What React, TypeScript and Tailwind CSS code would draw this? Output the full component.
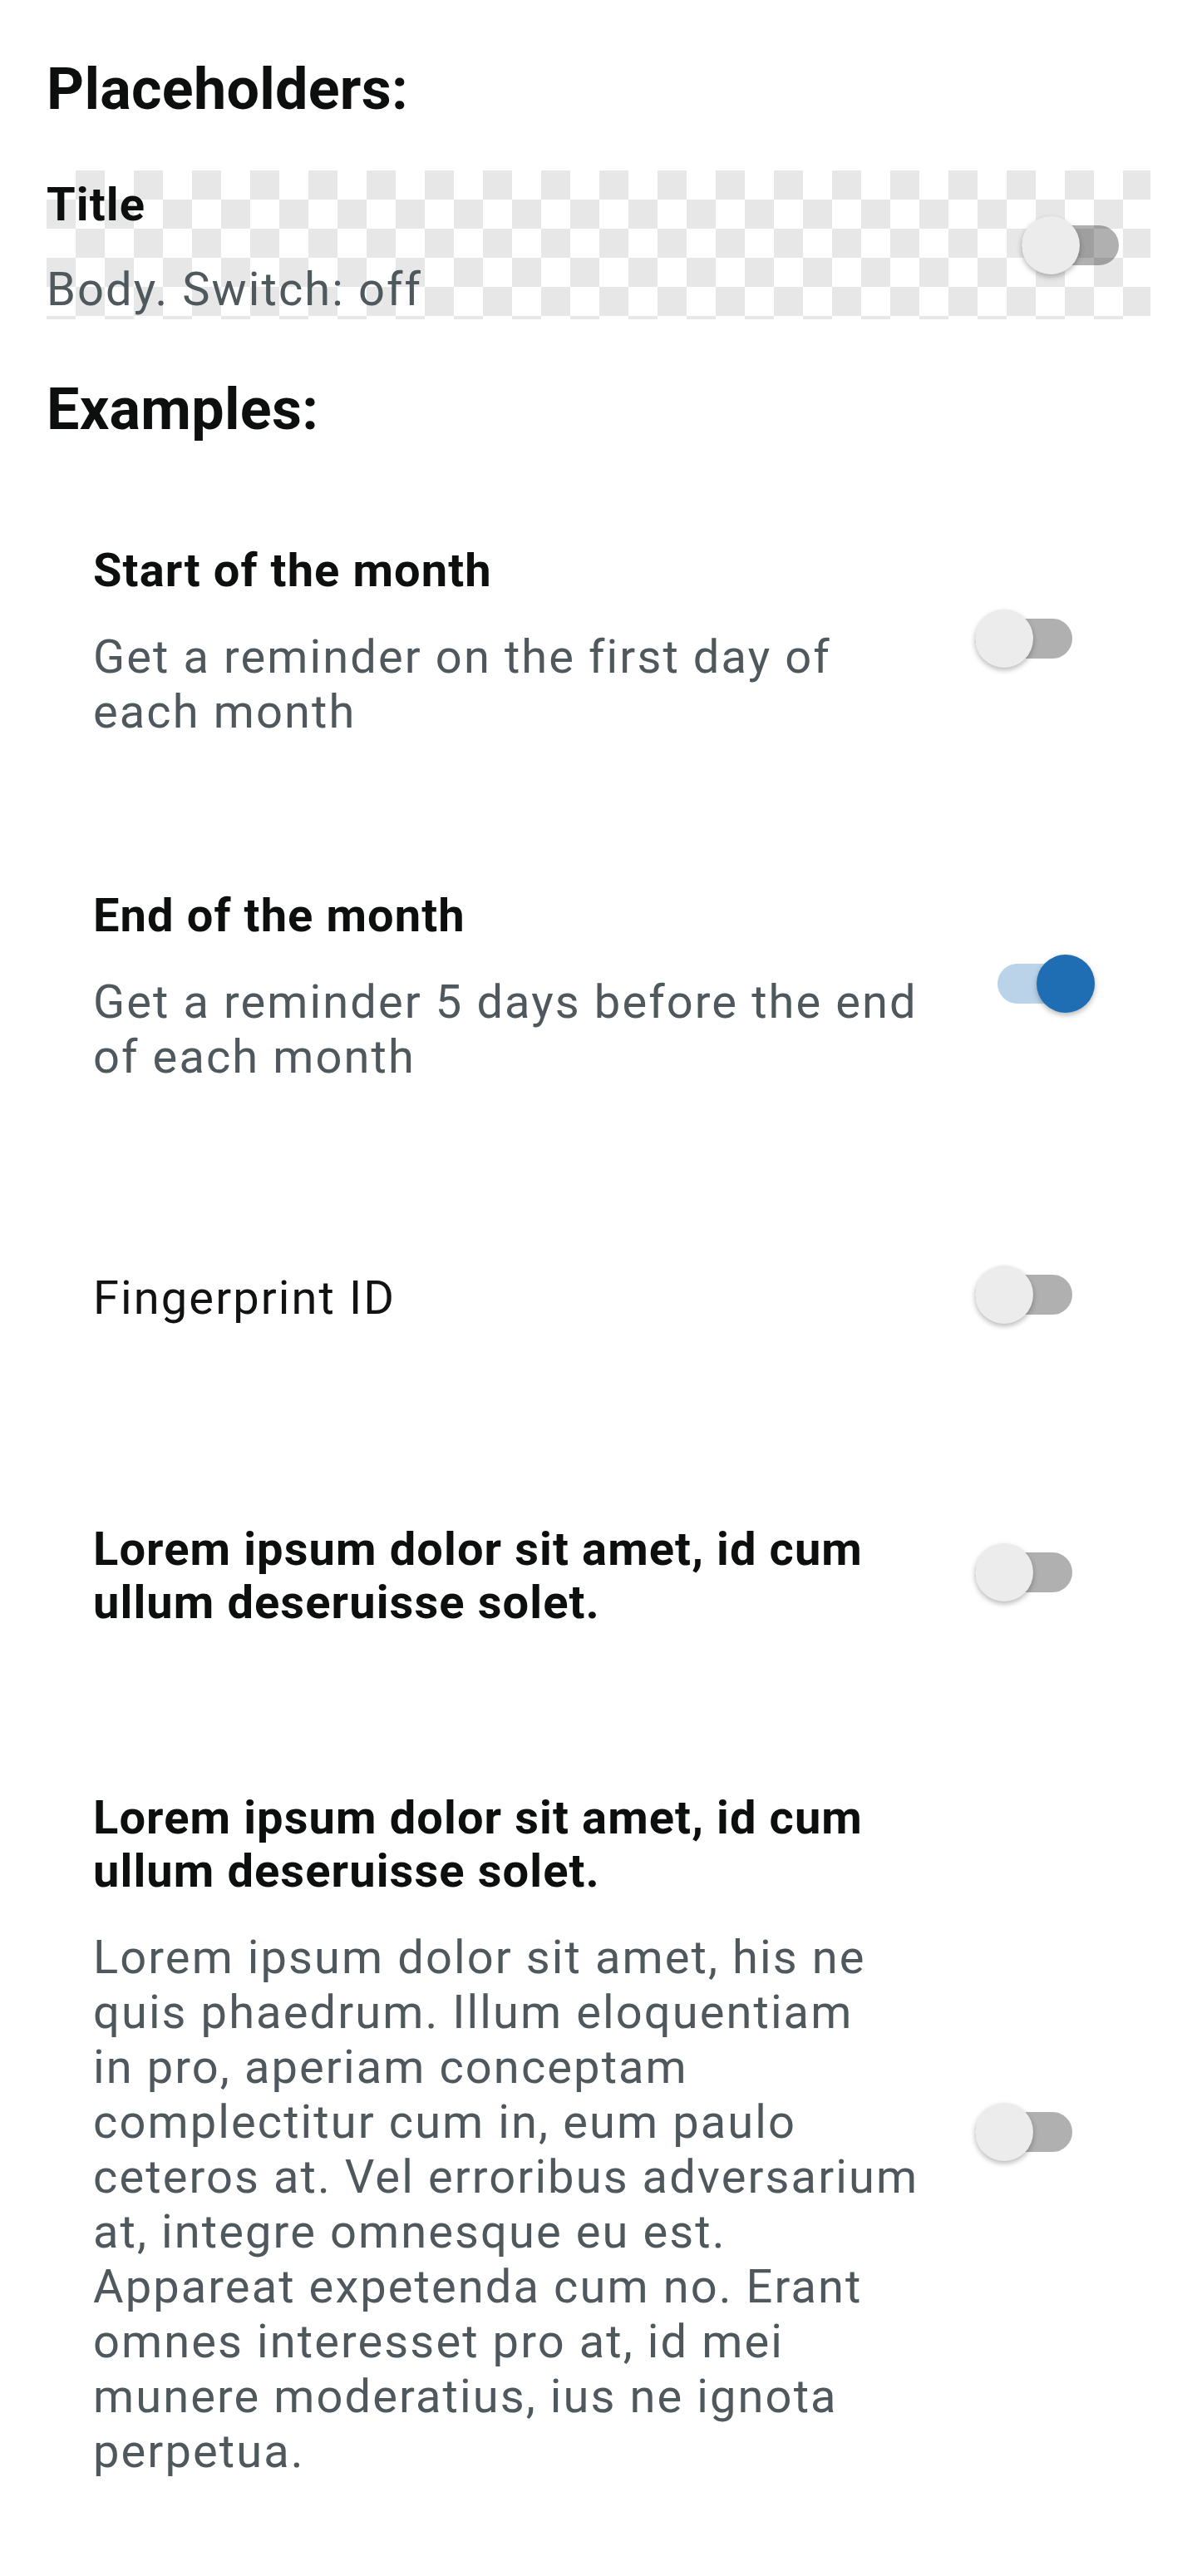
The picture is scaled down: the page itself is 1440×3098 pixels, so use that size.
import React from "react";

interface SwitchProps {
  on: boolean;
}

function Switch({ on }: SwitchProps) {
  return (
    <div className="relative w-[117px] h-[70px] shrink-0">
      <div
        className={`absolute left-0 right-0 top-[11px] h-[48px] rounded-full ${
          on ? "bg-[#bbd3e9]" : "bg-black/[0.31]"
        }`}
      />
      <div
        className={`absolute top-0 w-[70px] h-[70px] rounded-full shadow-[0_3px_6px_rgba(0,0,0,0.28)] ${
          on ? "right-0 bg-[#1f6eb4]" : "left-0 bg-[#ececec]"
        }`}
      />
    </div>
  );
}

function Lines({ lines }: { lines: string[] }) {
  return (
    <>
      {lines.map((l, i) => (
        <span key={i} className="block whitespace-nowrap">
          {l}
        </span>
      ))}
    </>
  );
}

interface RowProps {
  title?: string[];
  body?: string[];
  plain?: string;
  on?: boolean;
  className?: string;
}

function Row({ title, body, plain, on = false, className = "" }: RowProps) {
  return (
    <div className={`flex items-center pl-[112px] ${className}`}>
      <div className="w-[1061px] shrink-0">
        {plain && (
          <p className="text-[56px] leading-[66px] tracking-[2.1px] text-[#111312]">{plain}</p>
        )}
        {title && (
          <p className="text-[56px] leading-[64px] font-bold tracking-[1.1px] text-[#0d0f0e]">
            <Lines lines={title} />
          </p>
        )}
        {body && (
          <p className="mt-[39px] text-[56px] leading-[66px] tracking-[2.1px] text-[#4f585d]">
            <Lines lines={body} />
          </p>
        )}
      </div>
      <div className={`-translate-y-[4px] ${on ? "ml-[27px]" : ""}`}>
        <Switch on={on} />
      </div>
    </div>
  );
}

export default function App() {
  return (
    <div className="min-h-[3098px] bg-white font-['Roboto',sans-serif] pt-[66px] pb-[115px]">
      <h2 className="pl-[56px] text-[70px] leading-[82px] font-bold tracking-[0.3px] text-[#0d0f0e]">
        Placeholders:
      </h2>

      <div className="mx-[56px] mt-[57px] h-[179px] flex items-center justify-between bg-[conic-gradient(#e7e7e7_25%,#ffffff_0_50%,#e7e7e7_0_75%,#ffffff_0)] bg-[length:70px_70px]">
        <div className="self-start pt-[9px]">
          <p className="text-[56px] leading-[64px] font-bold tracking-[1.1px] text-[#0d0f0e]">Title</p>
          <p className="mt-[37px] text-[56px] leading-[66px] tracking-[2.1px] text-[#4f585d]">
            Body. Switch: off
          </p>
        </div>
        <div className="mr-[38px]">
          <Switch on={false} />
        </div>
      </div>

      <h2 className="mt-[67px] pl-[56px] text-[70px] leading-[82px] font-bold tracking-[0.3px] text-[#0d0f0e]">
        Examples:
      </h2>

      <Row
        className="mt-[121px]"
        title={["Start of the month"]}
        body={["Get a reminder on the first day of", "each month"]}
      />
      <Row
        className="mt-[180px]"
        on
        title={["End of the month"]}
        body={["Get a reminder 5 days before the end", "of each month"]}
      />
      <Row className="mt-[222px]" plain="Fingerprint ID" />
      <Row
        className="mt-[235px]"
        title={["Lorem ipsum dolor sit amet, id cum", "ullum deseruisse solet."]}
      />
      <Row
        className="mt-[195px]"
        title={["Lorem ipsum dolor sit amet, id cum", "ullum deseruisse solet."]}
        body={[
          "Lorem ipsum dolor sit amet, his ne",
          "quis phaedrum. Illum eloquentiam",
          "in pro, aperiam conceptam",
          "complectitur cum in, eum paulo",
          "ceteros at. Vel erroribus adversarium",
          "at, integre omnesque eu est.",
          "Appareat expetenda cum no. Erant",
          "omnes interesset pro at, id mei",
          "munere moderatius, ius ne ignota",
          "perpetua.",
        ]}
      />
    </div>
  );
}
